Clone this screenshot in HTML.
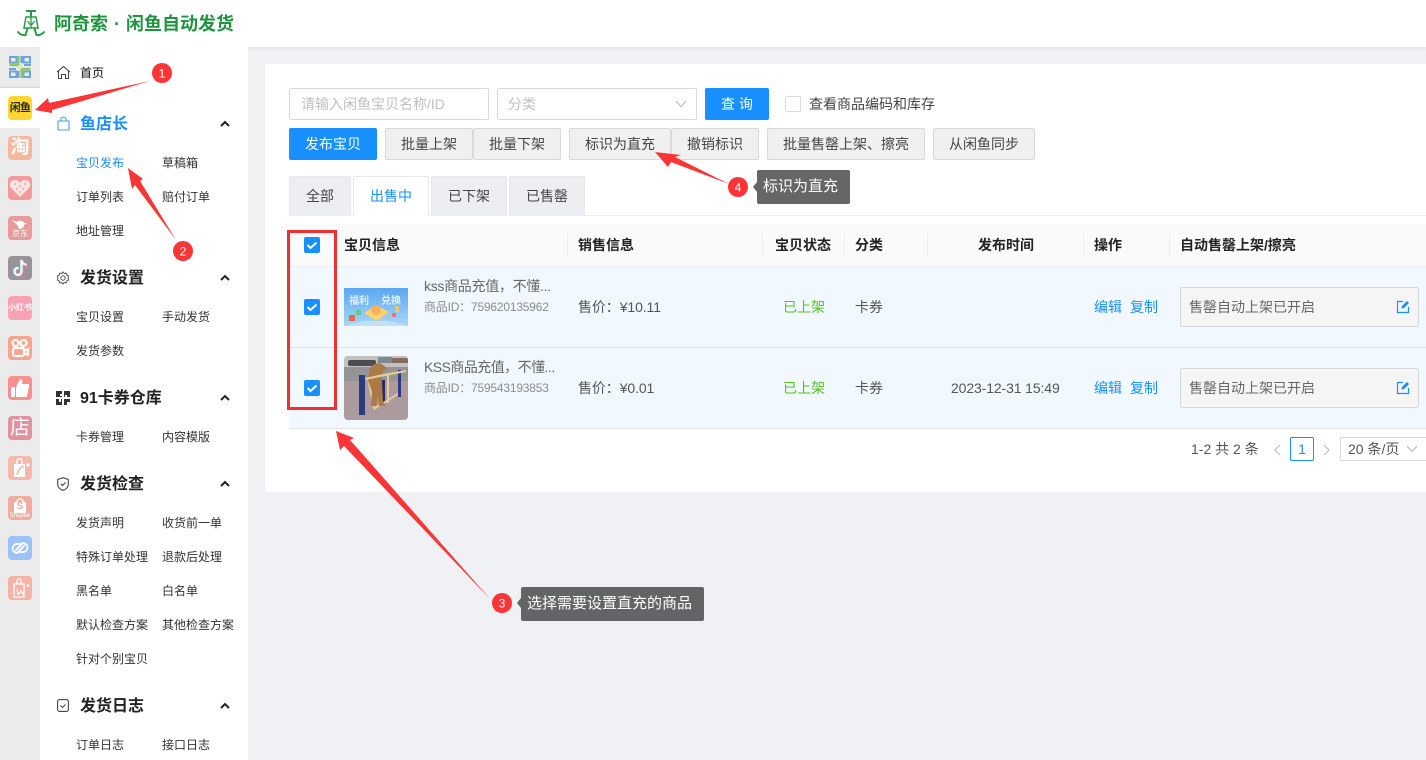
<!DOCTYPE html>
<html lang="zh-CN"><head><meta charset="utf-8"><title>阿奇索</title>
<style>
*{box-sizing:border-box}
html,body{margin:0;padding:0;width:1426px;height:760px;overflow:hidden;background:#eff1f5;font-family:"Liberation Sans","Noto Sans CJK SC",sans-serif;color:#333}
.a{position:absolute}
.t{position:absolute;white-space:nowrap;line-height:20px;font-size:14px}
.s{position:absolute;white-space:nowrap;line-height:20px;font-size:12px;color:#333;margin-top:1px}
.g{position:absolute;white-space:nowrap;line-height:24px;font-size:16px;font-weight:700;color:#222;left:80px;margin-top:4px}
.b{position:absolute;top:128px;height:32px;background:#f0f0f0;border:1px solid #d9d9d9;border-radius:2px;font-size:14px;line-height:31px;text-align:center;color:#444;white-space:nowrap}
.tab{position:absolute;top:176px;height:39px;background:#eceef1;border:1px solid #e8e8e8;border-bottom:0;border-radius:2px 2px 0 0;font-size:14px;line-height:39px;text-align:center;color:#444}
.cb{position:absolute;width:16px;height:16px;background:#1890ff;border-radius:2px}
.cb svg{display:block}
.d{position:absolute;top:234px;width:1px;height:22px;background:#eee}
.h{position:absolute;top:235px;font-size:14px;font-weight:700;line-height:20px;color:#222;white-space:nowrap}
.ri{position:absolute;left:8px;width:24px;height:24px;border-radius:4px;overflow:hidden}
.ri svg{display:block}
.ch{position:absolute;left:220px}
</style></head><body>

<!-- header -->
<div class="a" style="left:0;top:0;width:1426px;height:47px;background:#fff;box-shadow:0 1px 4px rgba(0,0,0,.08)"></div>
<svg class="a" style="left:16px;top:8px" width="30" height="30" viewBox="0 0 30 30" fill="none" stroke="#2a9b46">
<path d="M10 3h10M15 3v6" stroke-width="2"/>
<path d="M10 9h10l2 11H8z" stroke-width="1.500"/>
<path d="M15 9v11M11.500 13l3 4M18.500 13l-3 4" stroke-width="1.300"/>
<path d="M1.500 23.500c2.500 3 5.500 4 8 3.500l2-6.500M28.500 23.500c-2.500 3-5.500 4-8 3.500l-2-6.500" stroke-width="2"/>
</svg>
<div class="t" style="left:54px;top:13px;font-size:18px;font-weight:700;line-height:22px;color:#1f9440">阿奇索</div>
<div class="t" style="left:114px;top:13px;font-size:18px;font-weight:700;line-height:22px;color:#1f9440">·</div>
<div class="t" style="left:126px;top:13px;font-size:18px;font-weight:700;line-height:22px;color:#1f9440">闲鱼自动发货</div>

<!-- rail -->
<div class="a" style="left:0;top:47px;width:40px;height:713px;background:#ebebeb"></div>
<div class="a" style="left:0;top:87px;width:40px;height:1px;background:#d8d8d8"></div>
<div class="a" style="left:0;top:88px;width:40px;height:40px;background:#fff"></div>
<svg class="a" style="left:9px;top:56px" width="22" height="22" viewBox="0 0 22 22" fill="none">
<path d="M1 1h6.500v5.500H1zM14.500 1H21v5.500h-6.500zM1 15.500h6.500V21H1zM14.500 15.500H21V21h-6.500z" stroke="#6aa5dc" stroke-width="2"/>
<path d="M9.500 9h-9M12.500 13h9" stroke="#93c95a" stroke-width="2.400"/>
<path d="M9.500 0v9M12.500 22v-9" stroke="#93c95a" stroke-width="2.400"/>
<path d="M12.500 0v7M9.500 22v-7M0 13h7M22 9h-7" stroke="#6aa5dc" stroke-width="2"/>
<rect x="9" y="9" width="4" height="4" fill="#d8eabc"/>
</svg>

<div class="ri" style="top:96px;background:#ffd633;font-size:11px;font-weight:700;line-height:24px;text-align:center;color:#2b2b10;letter-spacing:-.8px">闲鱼</div>
<div class="ri" style="top:136px;background:#f5b89d;color:#fff;font-size:19px;font-weight:700;line-height:24px;text-align:center">淘</div>
<div class="ri" style="top:176px;background:#f49a9b"><svg width="24" height="24" viewBox="0 0 24 24"><path d="M12 21L3 12C0 8 3 4 7 4c2 0 4 1 5 3 1-2 3-3 5-3 4 0 7 4 4 8z" fill="#fbe4e4"/><path d="M6 8h2M11 10h2M16 8h2M8 13h2M14 13h2M11 16h2" stroke="#f49a9b" stroke-width="1.200"/></svg></div>
<div class="ri" style="top:216px;background:#e79c9b"><svg width="24" height="24" viewBox="0 0 24 24"><path d="M4 4l5 2c2-2 6-2 7 1l3 0-3 2c0 3-3 4-5 4l-1-3z" fill="#fff"/></svg><div class="a" style="left:0;top:13px;width:24px;text-align:center;color:#fff;font-size:8px;line-height:10px">京东</div></div>
<div class="ri" style="top:256px;background:#9a9299"><svg width="24" height="24" viewBox="0 0 24 24" fill="none"><path d="M13.500 4v11.500a3.500 3.500 0 1 1-3-3.500M13.500 4c.4 2.500 2 4.500 5 4.700" stroke="#58dfe3" stroke-width="2.400" transform="translate(-.6 -.4)"/><path d="M13.500 4v11.500a3.500 3.500 0 1 1-3-3.500M13.500 4c.4 2.500 2 4.500 5 4.700" stroke="#f58ba0" stroke-width="2.400" transform="translate(.6 .4)"/><path d="M13.500 4v11.500a3.500 3.500 0 1 1-3-3.500M13.500 4c.4 2.500 2 4.500 5 4.700" stroke="#fff" stroke-width="2"/></svg></div>
<div class="ri" style="top:296px;background:#f8a1b2;color:#fff;font-size:8px;font-weight:700;line-height:24px;text-align:center;white-space:nowrap">小红书</div>
<div class="ri" style="top:336px;background:#f9a48f"><svg width="24" height="24" viewBox="0 0 24 24" fill="none" stroke="#fff" stroke-width="2.200"><circle cx="7.500" cy="7" r="3"/><circle cx="15.500" cy="7" r="3"/><rect x="5" y="12" width="11" height="8" rx="2"/><path d="M16 15l4-2v6l-4-2"/></svg></div>
<div class="ri" style="top:376px;background:#f98f8f"><svg width="24" height="24" viewBox="0 0 24 24"><path d="M3 11h4v10H3zM8 11l4-8c2 0 3 1 2 5h6c1 0 1.500 1 1 2l-2 10c0 .5-.5 1-1 1H8z" fill="#fff"/></svg></div>
<div class="ri" style="top:416px;background:#e0929f;color:#fff;font-size:20px;line-height:24px;text-align:center">店</div>
<div class="ri" style="top:456px;background:#f5b8ac"><svg width="24" height="24" viewBox="0 0 24 24" fill="none"><path d="M6 8h11v13H6z" fill="#fff"/><path d="M9 8V5c0-3 5-3 5 0v3" stroke="#fff" stroke-width="1.500"/><path d="M9 19c1-5 4-8 7-9" stroke="#f5b8ac" stroke-width="1.500"/><path d="M20 7v4M18 9h4" stroke="#fff" stroke-width="1.300"/></svg></div>
<div class="ri" style="top:496px;background:#f1aca2"><svg width="24" height="24" viewBox="0 0 24 24" fill="none"><path d="M6 6h12v11H6z" fill="#fff"/><path d="M9 6c0-4 6-4 6 0" stroke="#fff" stroke-width="1.300"/></svg><div class="a" style="left:0;top:4px;width:24px;text-align:center;color:#f1aca2;font-size:10px;font-weight:700;line-height:14px">S</div><div class="a" style="left:0;top:17px;width:24px;text-align:center;color:#fff;font-size:6px;line-height:7px">Shopee</div></div>
<div class="ri" style="top:536px;background:#9cc2f8"><svg width="24" height="24" viewBox="0 0 24 24" fill="none" stroke="#fff" stroke-width="1.800"><path d="M13 8H9a4.500 4.500 0 0 0-2 8.500l2 .5 8-8"/><path d="M11 16h4a4.500 4.500 0 0 0 2-8.500L15 7l-8 8"/></svg></div>
<div class="ri" style="top:576px;background:#f5b2a6"><svg width="24" height="24" viewBox="0 0 24 24" fill="none" stroke="#fff" stroke-width="1.300"><path d="M6 8h10v13H6zM9 8V5c0-3 4-3 4 0v3M10 19l-1-6M10 19l3-4 3 4"/><path d="M20 8v3M18.500 9.500h3"/></svg></div>

<!-- menu -->
<div class="a" style="left:40px;top:47px;width:208px;height:713px;background:#fff"></div>
<svg class="a" style="left:56px;top:65px" width="15" height="15" viewBox="0 0 15 15" fill="none" stroke="#444" stroke-width="1.100"><path d="M1 7L7.500 1.500 14 7M2.500 6v7.500h3v-4h4v4h3V6"/></svg>
<div class="s" style="left:80px;top:62px;font-weight:500">首页</div>

<svg class="a" style="left:57px;top:116px" width="13" height="15" viewBox="0 0 13 15" fill="none" stroke="#4a9df8" stroke-width="1.100"><path d="M1 5h11v9H1zM4 5V3c0-2.500 5-2.500 5 0v2"/></svg>
<div class="g" style="top:109px;color:#1890ff">鱼店长</div>
<div class="s" style="left:76px;top:152px;color:#1890ff">宝贝发布</div><div class="s" style="left:162px;top:152px">草稿箱</div>
<div class="s" style="left:76px;top:186px">订单列表</div><div class="s" style="left:162px;top:186px">赔付订单</div>
<div class="s" style="left:76px;top:220px">地址管理</div>

<svg class="a" style="left:56px;top:271px" width="14" height="14" viewBox="0 0 14 14" fill="none" stroke="#555" stroke-width="1"><circle cx="7" cy="7" r="2.200"/><path d="M7 1l1.300 1.500 2-.3.600 1.900 1.800.9-.6 2 .6 2-1.800.9-.6 1.900-2-.3L7 13l-1.300-1.500-2 .3-.6-1.900-1.800-.9.600-2-.6-2 1.800-.9.600-1.900 2 .3z"/></svg>
<div class="g" style="top:263px">发货设置</div>
<div class="s" style="left:76px;top:306px">宝贝设置</div><div class="s" style="left:162px;top:306px">手动发货</div>
<div class="s" style="left:76px;top:340px">发货参数</div>

<svg class="a" style="left:56px;top:391px" width="14" height="14" viewBox="0 0 14 14" fill="#333"><path d="M0 0h6v3H4v2h2v1H0zM8 0h6v6h-3V4H9v2H8zM0 8h3v3h2V8h1v6H0zM8 8h6v3h-3v3H8z"/></svg>
<div class="g" style="top:383px">91卡券仓库</div>
<div class="s" style="left:76px;top:426px">卡券管理</div><div class="s" style="left:162px;top:426px">内容模版</div>

<svg class="a" style="left:57px;top:477px" width="12" height="14" viewBox="0 0 12 14" fill="none" stroke="#444" stroke-width="1.100"><path d="M6 .7l5.300 1.800v5C11.300 10.500 8.500 12.500 6 13.300 3.500 12.500.7 10.500.7 7.500v-5z"/><path d="M3.800 6.800l1.700 1.700 3-3"/></svg>
<div class="g" style="top:469px">发货检查</div>
<div class="s" style="left:76px;top:512px">发货声明</div><div class="s" style="left:162px;top:512px">收货前一单</div>
<div class="s" style="left:76px;top:546px">特殊订单处理</div><div class="s" style="left:162px;top:546px">退款后处理</div>
<div class="s" style="left:76px;top:580px">黑名单</div><div class="s" style="left:162px;top:580px">白名单</div>
<div class="s" style="left:76px;top:614px">默认检查方案</div><div class="s" style="left:162px;top:614px">其他检查方案</div>
<div class="s" style="left:76px;top:648px">针对个别宝贝</div>

<svg class="a" style="left:57px;top:699px" width="12" height="13" viewBox="0 0 12 13" fill="none" stroke="#444" stroke-width="1.100"><rect x=".6" y=".6" width="10.800" height="11.800" rx="2"/><path d="M3.500 6.500l2 2 3-3"/></svg>
<div class="g" style="top:691px">发货日志</div>
<div class="s" style="left:76px;top:734px">订单日志</div><div class="s" style="left:162px;top:734px">接口日志</div>

<svg class="ch" style="top:120px" width="10" height="7" viewBox="0 0 10 7" fill="none" stroke="#222" stroke-width="2"><path d="M1 6l4-4 4 4"/></svg>
<svg class="ch" style="top:274px" width="10" height="7" viewBox="0 0 10 7" fill="none" stroke="#222" stroke-width="2"><path d="M1 6l4-4 4 4"/></svg>
<svg class="ch" style="top:394px" width="10" height="7" viewBox="0 0 10 7" fill="none" stroke="#222" stroke-width="2"><path d="M1 6l4-4 4 4"/></svg>
<svg class="ch" style="top:480px" width="10" height="7" viewBox="0 0 10 7" fill="none" stroke="#222" stroke-width="2"><path d="M1 6l4-4 4 4"/></svg>
<svg class="ch" style="top:702px" width="10" height="7" viewBox="0 0 10 7" fill="none" stroke="#222" stroke-width="2"><path d="M1 6l4-4 4 4"/></svg>

<!-- panel -->
<div class="a" style="left:265px;top:64px;width:1161px;height:428px;background:#fff"></div>

<div class="a" style="left:289px;top:88px;width:200px;height:32px;border:1px solid #d9d9d9;border-radius:2px"></div>
<div class="t" style="left:301px;top:94px;color:#bfbfbf">请输入闲鱼宝贝名称/ID</div>
<div class="a" style="left:497px;top:88px;width:200px;height:32px;border:1px solid #d9d9d9;border-radius:2px"></div>
<div class="t" style="left:508px;top:94px;color:#bfbfbf">分类</div>
<svg class="a" style="left:675px;top:100px" width="12" height="8" viewBox="0 0 12 8" fill="none" stroke="#bbb" stroke-width="1.100"><path d="M1 1l5 5.500L11 1"/></svg>
<div class="a" style="left:705px;top:88px;width:64px;height:32px;background:#1890ff;border-radius:2px;color:#fff;font-size:14px;line-height:32px;text-align:center">查 询</div>
<div class="a" style="left:785px;top:96px;width:16px;height:16px;border:1px solid #d9d9d9;border-radius:2px;background:#fff"></div>
<div class="t" style="left:809px;top:94px;color:#444">查看商品编码和库存</div>

<div class="b" style="left:289px;width:88px;background:#1890ff;border-color:#1890ff;color:#fff">发布宝贝</div>
<div class="b" style="left:385px;width:88px">批量上架</div>
<div class="b" style="left:473px;width:88px">批量下架</div>
<div class="b" style="left:569px;width:102px">标识为直充</div>
<div class="b" style="left:671px;width:88px">撤销标识</div>
<div class="b" style="left:767px;width:158px">批量售罄上架、擦亮</div>
<div class="b" style="left:933px;width:102px">从闲鱼同步</div>

<div class="a" style="left:289px;top:215px;width:1137px;height:1px;background:#eee"></div>
<div class="tab" style="left:289px;width:62px">全部</div>
<div class="tab" style="left:353px;width:76px;height:40px;background:#fff;color:#1890ff">出售中</div>
<div class="tab" style="left:431px;width:76px">已下架</div>
<div class="tab" style="left:509px;width:76px">已售罄</div>

<!-- table -->
<div class="a" style="left:289px;top:224px;width:1137px;height:43px;background:#fafafa;border-bottom:1px solid #f0f0f0"></div>
<div class="d" style="left:567px"></div><div class="d" style="left:762px"></div><div class="d" style="left:844px"></div><div class="d" style="left:927px"></div><div class="d" style="left:1083px"></div><div class="d" style="left:1169px"></div>
<div class="h" style="left:344px">宝贝信息</div>
<div class="h" style="left:578px">销售信息</div>
<div class="h" style="left:775px">宝贝状态</div>
<div class="h" style="left:855px">分类</div>
<div class="h" style="left:978px">发布时间</div>
<div class="h" style="left:1094px">操作</div>
<div class="h" style="left:1180px">自动售罄上架/擦亮</div>

<div class="a" style="left:289px;top:267px;width:1137px;height:81px;background:#f1f8ff;border-bottom:1px solid #dfe3e6"></div>
<div class="a" style="left:289px;top:348px;width:1137px;height:81px;background:#f1f8ff;border-bottom:1px solid #dfe3e6"></div>

<div class="cb" style="left:304px;top:237px"><svg width="16" height="16" viewBox="0 0 16 16" fill="none" stroke="#fff" stroke-width="2"><path d="M3.500 8l3 3 6-5.500"/></svg></div>
<div class="cb" style="left:304px;top:299px"><svg width="16" height="16" viewBox="0 0 16 16" fill="none" stroke="#fff" stroke-width="2"><path d="M3.500 8l3 3 6-5.500"/></svg></div>
<div class="cb" style="left:304px;top:380px"><svg width="16" height="16" viewBox="0 0 16 16" fill="none" stroke="#fff" stroke-width="2"><path d="M3.500 8l3 3 6-5.500"/></svg></div>

<!-- thumbs -->
<svg class="a" style="left:344px;top:288px" width="64" height="38" viewBox="0 0 64 38">
<defs><linearGradient id="g1" x1="0" y1="0" x2="0" y2="1"><stop offset="0" stop-color="#5aa7f2"/><stop offset="1" stop-color="#a9d6f7"/></linearGradient></defs>
<rect width="64" height="38" fill="url(#g1)"/>
<text x="5" y="16" font-size="10" fill="#dff0fb" font-weight="700" font-family="Noto Sans CJK SC, sans-serif">福利</text>
<text x="37" y="16" font-size="10" fill="#dff0fb" font-weight="700" font-family="Noto Sans CJK SC, sans-serif">兑换</text>
<path d="M20 25l12-8 13 7-12 9z" fill="#f9d36b"/><circle cx="32" cy="22" r="5" fill="#fbb05d"/>
<rect x="5" y="27" width="6" height="6" fill="#e8694a"/><rect x="12" y="22" width="5" height="5" fill="#5fc79a"/><rect x="48" y="25" width="4" height="4" fill="#e77a6a"/><rect x="51" y="18" width="4" height="6" fill="#f0c95a"/>
<path d="M0 38l20-5h24l20 5z" fill="#c4e0f6"/>
</svg>
<svg class="a" style="left:344px;top:356px" width="64" height="64" viewBox="0 0 64 64">
<clipPath id="c2"><rect width="64" height="64" rx="4"/></clipPath>
<g clip-path="url(#c2)">
<rect width="64" height="64" fill="#ab9b9d"/>
<rect width="64" height="12" fill="#c4c1c0"/><rect y="11" width="64" height="14" fill="#949395"/>
<rect x="4" y="4" width="28" height="6" rx="2" fill="#4c4d53"/><rect x="34" y="1" width="14" height="6" fill="#7d8a93"/><rect x="48" y="2" width="16" height="5" fill="#8a6a60"/>
<rect x="15" y="19" width="6" height="40" fill="#2c3a80"/><rect x="38" y="24" width="3" height="22" fill="#222c66"/><rect x="54" y="14" width="3" height="27" fill="#2c3a80"/>
<path d="M23 22l2 0 6 30h-2zM43 17h2l0 30h-2zM29 52l25-15v2L30 54z" fill="#e5cd9a"/>
<path d="M25 16c1-8 10-11 14-7l4 3-4 3-1 6 0 6 1 19 3 4h-7l-1-9-2 9h-5l1-15-4-10z" fill="#ab7a45"/>
<path d="M21 22l18-4 23-4v2l-41 8z" fill="#e5cd9a"/>
</g></svg>

<!-- row 1 -->
<div class="t" style="left:424px;top:276px;color:#666;letter-spacing:-.3px">kss商品充值，不懂...</div>
<div class="t" style="left:424px;top:297px;color:#8c8c8c;font-size:12px;letter-spacing:-.2px">商品ID：759620135962</div>
<div class="t" style="left:578px;top:297px;color:#555;letter-spacing:-.1px">售价：¥10.11</div>
<div class="t" style="left:783px;top:297px;color:#52c41a">已上架</div>
<div class="t" style="left:855px;top:297px;color:#555">卡券</div>
<div class="t" style="left:1094px;top:297px;color:#1890ff">编辑</div><div class="t" style="left:1130px;top:297px;color:#1890ff">复制</div>
<div class="a" style="left:1180px;top:287px;width:239px;height:40px;background:#f5f5f5;border:1px solid #d9d9d9;border-radius:2px"></div>
<div class="t" style="left:1189px;top:297px;color:#666">售罄自动上架已开启</div>
<svg class="a" style="left:1396px;top:300px" width="14" height="14" viewBox="0 0 14 14" fill="none" stroke="#1890ff" stroke-width="1.200"><path d="M7 1.500H1.500v11h11V7"/><path d="M5.500 8.500l.5-2.500L11 1l2 2-5 5z" fill="#1890ff" stroke="none"/></svg>

<!-- row 2 -->
<div class="t" style="left:424px;top:357px;color:#666;letter-spacing:-.55px">KSS商品充值，不懂...</div>
<div class="t" style="left:424px;top:378px;color:#8c8c8c;font-size:12px;letter-spacing:-.2px">商品ID：759543193853</div>
<div class="t" style="left:578px;top:378px;color:#555;letter-spacing:-.1px">售价：¥0.01</div>
<div class="t" style="left:783px;top:378px;color:#52c41a">已上架</div>
<div class="t" style="left:855px;top:378px;color:#555">卡券</div>
<div class="t" style="left:951px;top:378px;color:#555;letter-spacing:-.12px">2023-12-31 15:49</div>
<div class="t" style="left:1094px;top:378px;color:#1890ff">编辑</div><div class="t" style="left:1130px;top:378px;color:#1890ff">复制</div>
<div class="a" style="left:1180px;top:368px;width:239px;height:40px;background:#f5f5f5;border:1px solid #d9d9d9;border-radius:2px"></div>
<div class="t" style="left:1189px;top:378px;color:#666">售罄自动上架已开启</div>
<svg class="a" style="left:1396px;top:381px" width="14" height="14" viewBox="0 0 14 14" fill="none" stroke="#1890ff" stroke-width="1.200"><path d="M7 1.500H1.500v11h11V7"/><path d="M5.500 8.500l.5-2.500L11 1l2 2-5 5z" fill="#1890ff" stroke="none"/></svg>

<!-- pagination -->
<div class="t" style="left:1191px;top:439px;color:#555">1-2 共 2 条</div>
<svg class="a" style="left:1273px;top:444px" width="9" height="12" viewBox="0 0 9 12" fill="none" stroke="#bbb" stroke-width="1.100"><path d="M7 1L2 6l5 5"/></svg>
<div class="a" style="left:1290px;top:437px;width:24px;height:24px;border:1px solid #1890ff;border-radius:2px;color:#1890ff;font-size:14px;line-height:22px;text-align:center">1</div>
<svg class="a" style="left:1322px;top:444px" width="9" height="12" viewBox="0 0 9 12" fill="none" stroke="#bbb" stroke-width="1.100"><path d="M2 1l5 5-5 5"/></svg>
<div class="a" style="left:1340px;top:437px;width:100px;height:24px;border:1px solid #d9d9d9;border-radius:2px"></div>
<div class="t" style="left:1348px;top:439px;color:#555">20 条/页</div>
<svg class="a" style="left:1406px;top:445px" width="12" height="8" viewBox="0 0 12 8" fill="none" stroke="#bbb" stroke-width="1.100"><path d="M1 1l5 5.500L11 1"/></svg>

<!-- annotations -->
<svg class="a" style="left:0;top:0" width="1426" height="760" viewBox="0 0 1426 760">
<rect x="288.500" y="231.500" width="47" height="177" fill="none" stroke="#f03030" stroke-width="3"/>
<g fill="#fb3535">
<polygon points="150,81 49,103 48,98 35,110 52,113 52,110"/>
<polygon points="176,240 140,181 143,179 128,168 132,189 135,185"/>
<polygon points="491,600 344,446 340,450 336,431 354,438 350,440"/>
<polygon points="729,184 675,157 681,155 655,152 668,167 671,162"/>
<circle cx="162" cy="73" r="10"/><circle cx="183" cy="251" r="10"/><circle cx="738" cy="187" r="10"/><circle cx="502" cy="603" r="10"/>
</g>
<g fill="#fff" font-size="12" text-anchor="middle" font-family="Liberation Sans, sans-serif">
<text x="162" y="77.500">1</text><text x="183" y="255.500">2</text><text x="738" y="191.500">4</text><text x="502" y="607.500">3</text>
</g>
<polygon points="757,182 753,187 757,192" fill="#666"/>
<polygon points="521,598 517,603 521,608" fill="#636466"/>
</svg>
<div class="a" style="left:757px;top:170px;width:93px;height:34px;background:#666;border-radius:2px;color:#fff;font-size:15px;line-height:33px;padding-left:6px;white-space:nowrap">标识为直充</div>
<div class="a" style="left:521px;top:587px;width:183px;height:34px;background:#636466;border-radius:2px;color:#fff;font-size:15px;line-height:33px;padding-left:6px;white-space:nowrap">选择需要设置直充的商品</div>
</body></html>
